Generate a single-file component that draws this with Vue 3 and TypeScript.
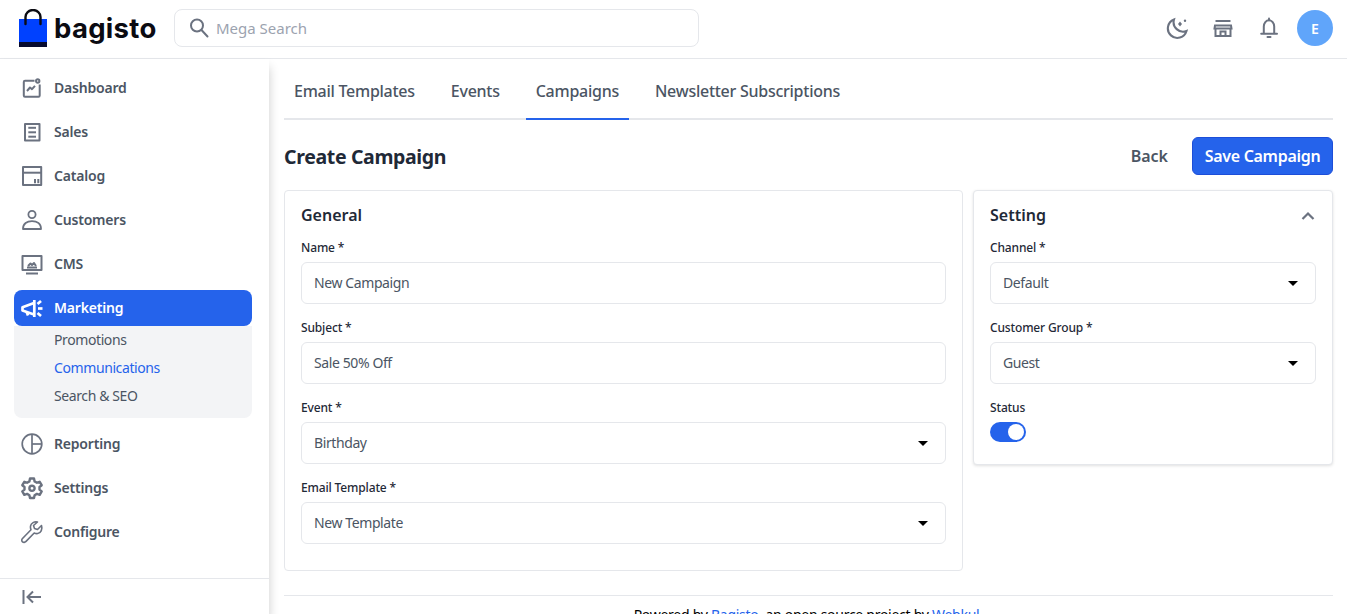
<script setup lang="ts">
interface NavItem {
  label: string;
  icon: string[];
  stroke?: number;
  active?: boolean;
  children?: { label: string; current?: boolean }[];
}

const nav: NavItem[] = [
  {
    label: "Dashboard",
    icon: [
      "M14.5 4.8H5A1.2 1.2 0 0 0 3.8 6V19.5A1.2 1.2 0 0 0 5 20.7H18.5A1.2 1.2 0 0 0 19.7 19.5V8.5",
      "M7 15L10 11.5L12 13.2L15 9.8",
      "M19.4 5A1.7 1.7 0 1 1 16 5A1.7 1.7 0 1 1 19.4 5Z",
    ],
  },
  {
    label: "Sales",
    icon: ["M5 4H19.5V20.5H5Z", "M8.3 7.8H16", "M8.3 12.3H16", "M8.3 16.7H16"],
  },
  {
    label: "Catalog",
    icon: ["M3 3H21.2V21H3Z", "M3 8.7H21.2", "M15 19.2V15", "M18.3 19.2V15"],
  },
  {
    label: "Customers",
    stroke: 1.8,
    icon: [
      "M15.6 6.5A3.6 3.6 0 1 1 8.4 6.5A3.6 3.6 0 1 1 15.6 6.5Z",
      "M3 21C3 15.5 7 13.2 12 13.2C17 13.2 21 15.5 21 21H3Z",
    ],
  },
  {
    label: "CMS",
    icon: [
      "M2.5 4H21.5V18H2.5Z",
      "M6 21.5H18",
      "M7 15.5H17",
      "M8 14L10.5 11.5L12 13L14 11L16 14",
    ],
  },
  {
    label: "Marketing",
    active: true,
    icon: [
      "M14.3 4V21",
      "M14 7L2.5 11.3V14.5L14 18.5",
      "M6.5 15.5L8 19.5",
      "M17.5 8L21 5",
      "M18 12.5H22.5",
      "M17.5 17L21 20",
    ],
    children: [
      { label: "Promotions" },
      { label: "Communications", current: true },
      { label: "Search & SEO" },
    ],
  },
  {
    label: "Reporting",
    stroke: 1.7,
    icon: [
      "M21.8 12A9.8 9.8 0 1 1 2.2 12A9.8 9.8 0 1 1 21.8 12Z",
      "M12 2.2V21.8",
      "M12 12H21.8",
    ],
  },
  {
    label: "Settings",
    stroke: 2.4,
    icon: [
      "M10 2.5H14L14.6 5.4L16.9 6.7L19.7 5.8L21.7 9.2L19.5 11V13.6L21.7 15.4L19.7 18.8L16.9 17.9L14.6 19.2L14 22H10L9.4 19.2L7.1 17.9L4.3 18.8L2.3 15.4L4.5 13.6V11L2.3 9.2L4.3 5.8L7.1 6.7L9.4 5.4Z",
      "M14.6 12.3A2.6 2.6 0 1 1 9.4 12.3A2.6 2.6 0 1 1 14.6 12.3Z",
    ],
  },
  {
    label: "Configure",
    stroke: 1.6,
    icon: [
      "M21.5 5.5L17.5 9.5L14.5 8.5L13.5 5.5L17.5 2C14.5 1.2 11 3 10.5 6.2C10.3 7.5 10.5 8.7 11 9.8L2.5 18.5C1.5 19.5 1.5 21 2.5 21.8C3.5 22.7 5 22.6 5.8 21.6L14.2 13C15.3 13.5 16.5 13.7 17.7 13.5C21 13 22.7 9 21.5 5.5Z",
    ],
  },
];

const tabs = [
  { label: "Email Templates" },
  { label: "Events" },
  { label: "Campaigns", active: true },
  { label: "Newsletter Subscriptions" },
];

const generalFields = [
  { label: "Name *", value: "New Campaign", select: false },
  { label: "Subject *", value: "Sale 50% Off", select: false },
  { label: "Event *", value: "Birthday", select: true },
  { label: "Email Template *", value: "New Template", select: true },
];

const settingFields = [
  { label: "Channel *", value: "Default", select: true },
  { label: "Customer Group *", value: "Guest", select: true },
];
</script>

<template>
  <div class="page">
    <header class="topbar">
      <div class="brand">
        <svg class="bag" viewBox="0 0 28 38" width="28" height="38">
          <rect x="0" y="10" width="28" height="28" fill="#0041ff" />
          <rect x="0" y="33" width="28" height="5" fill="#060a2e" />
          <path d="M6.5 15V8A7.5 7 0 0 1 21.5 8V15" fill="none" stroke="#0b0b12" stroke-width="2.4" stroke-linecap="round" />
        </svg>
        <span class="wordmark">bagisto</span>
      </div>
      <div class="search">
        <svg viewBox="0 0 24 24" width="24" height="24" fill="none" stroke="#6b7280" stroke-width="2">
          <circle cx="10" cy="9.5" r="6" />
          <path d="M14.5 14L20.5 20.5" stroke-linecap="round" />
        </svg>
        <span>Mega Search</span>
      </div>
      <div class="top-actions">
        <div class="top-icons">
          <svg viewBox="0 0 24 24" width="24" height="24" fill="none" stroke="#6b7280" stroke-width="2.1">
            <path d="M9 3.5A9.5 9.5 0 1 0 21.5 15A9.5 9.5 0 0 1 9 3.5Z" />
            <path d="M15 5.6L17 8L15 10.4L13 8Z" fill="#6b7280" stroke="none" />
            <circle cx="20" cy="4.7" r="1.2" fill="#6b7280" stroke="none" />
          </svg>
          <svg viewBox="0 0 24 24" width="24" height="24" fill="none" stroke="#6b7280" stroke-width="2">
            <path d="M4.5 5H19.5" />
            <path d="M4 9.5H20L20.5 12.5H3.5Z" />
            <path d="M4.5 12.5V20H19.5V12.5" />
            <path d="M9.5 20V15.5H14.5V20" />
          </svg>
          <svg viewBox="0 0 24 24" width="24" height="24" fill="none" stroke="#6b7280" stroke-width="2">
            <path d="M6.8 17.5V10.5A5.2 6.2 0 0 1 17.2 10.5V17.5" />
            <path d="M4.2 17.8H20" stroke-linecap="round" />
            <path d="M12 2.5V4.2" stroke-linecap="round" />
            <path d="M10.5 21H13.5" stroke-linecap="round" />
          </svg>
        </div>
        <div class="avatar">E</div>
      </div>
    </header>

    <div class="body">
      <aside class="sidebar">
        <nav class="menu">
          <div v-for="item in nav" :key="item.label" class="menu-group">
            <a class="menu-item" :class="{ active: item.active }">
              <svg viewBox="0 0 24 24" width="24" height="24" fill="none" stroke="currentColor" :stroke-width="item.stroke ?? 2" stroke-linejoin="round">
                <path v-for="d in item.icon" :key="d" :d="d" />
              </svg>
              <span>{{ item.label }}</span>
            </a>
            <div v-if="item.children" class="submenu">
              <a
                v-for="child in item.children"
                :key="child.label"
                :class="{ current: child.current }"
              >{{ child.label }}</a>
            </div>
          </div>
        </nav>
        <div class="collapse">
          <svg viewBox="0 0 24 24" width="24" height="24" fill="none" stroke="#6b7280" stroke-width="2">
            <path d="M3.5 5V19" />
            <path d="M21 12H8" />
            <path d="M13 6.5L7.5 12L13 17.5" />
          </svg>
        </div>
      </aside>

      <main class="content">
        <div class="tabs">
          <a v-for="tab in tabs" :key="tab.label" class="tab" :class="{ active: tab.active }">{{ tab.label }}</a>
        </div>

        <div class="title-row">
          <h1>Create Campaign</h1>
          <div class="title-actions">
            <a class="back">Back</a>
            <button type="button" class="save">Save Campaign</button>
          </div>
        </div>

        <div class="columns">
          <section class="card general">
            <h2>General</h2>
            <div v-for="field in generalFields" :key="field.label" class="field">
              <label>{{ field.label }}</label>
              <div class="control">
                <span>{{ field.value }}</span>
                <i v-if="field.select" class="caret"></i>
              </div>
            </div>
          </section>

          <section class="card setting">
            <div class="card-head">
              <h2>Setting</h2>
              <svg viewBox="0 0 24 24" width="24" height="24" fill="none" stroke="#6b7280" stroke-width="2.2">
                <path d="M6.5 16L12 10.5L17.5 16" />
              </svg>
            </div>
            <div v-for="field in settingFields" :key="field.label" class="field">
              <label>{{ field.label }}</label>
              <div class="control">
                <span>{{ field.value }}</span>
                <i class="caret"></i>
              </div>
            </div>
            <div class="field status">
              <label>Status</label>
              <div class="toggle"><i></i></div>
            </div>
          </section>
        </div>

        <footer class="powered">
          Powered by <a>Bagisto</a>, an open source project by <a>Webkul</a>
        </footer>
      </main>
    </div>
  </div>
</template>

<style>
html,
body {
  margin: 0;
  background: #fff;
}
</style>

<style scoped>
* {
  box-sizing: border-box;
}

.page {
  height: 614px;
  overflow: hidden;
  font-family: "Noto Sans", sans-serif;
  color: #4b5563;
}

.topbar {
  height: 59px;
  display: flex;
  align-items: center;
  padding: 0 14px 2px 19px;
  border-bottom: 1px solid #e5e7eb;
}

.brand {
  display: flex;
  align-items: flex-end;
  gap: 7px;
  width: 155px;
}

.bag {
  display: block;
}

.wordmark {
  font-family: Inter, sans-serif;
  font-size: 27.5px;
  font-weight: 700;
  line-height: 38px;
  letter-spacing: 0.3px;
  color: #0b0b12;
}

.search {
  width: 525px;
  height: 38px;
  display: flex;
  align-items: center;
  gap: 5px;
  padding-left: 12px;
  border: 1px solid #e5e7eb;
  border-radius: 8px;
  font-size: 15px;
  color: #9ca3af;
}

.top-actions {
  margin-left: auto;
  display: flex;
  align-items: center;
  gap: 16px;
}

.top-icons {
  display: flex;
  align-items: center;
  gap: 22px;
}

.avatar {
  width: 36px;
  height: 36px;
  border-radius: 50%;
  background: #60a5fa;
  color: #fff;
  font-size: 14px;
  font-weight: 600;
  display: flex;
  align-items: center;
  justify-content: center;
}

.body {
  display: flex;
  height: 555px;
}

.sidebar {
  width: 269px;
  flex: none;
  display: flex;
  flex-direction: column;
  padding-top: 11px;
  box-shadow: 0 8px 10px 0 rgba(0, 0, 0, 0.2);
}

.menu {
  flex: 1;
  display: flex;
  flex-direction: column;
  gap: 8px;
  padding: 0 17px 0 14px;
}

.menu-item {
  height: 36px;
  display: flex;
  align-items: center;
  gap: 10px;
  padding-left: 6px;
  border-radius: 8px;
  font-size: 14px;
  font-weight: 600;
  letter-spacing: -0.2px;
  color: #4b5563;
}

.menu-item span {
  padding-bottom: 2px;
}

.menu-item svg {
  color: #6b7280;
  flex: none;
}

.menu-item.active {
  background: #2563eb;
  color: #fff;
}

.menu-item.active svg {
  color: #fff;
  stroke-width: 2.7;
}

.submenu {
  display: flex;
  flex-direction: column;
  padding: 0 0 8px 40px;
  background: #f3f4f6;
  border-radius: 0 0 8px 8px;
  font-size: 14px;
  letter-spacing: -0.4px;
}

.submenu a {
  height: 28px;
  line-height: 28px;
  color: #4b5563;
}

.submenu a.current {
  color: #2563eb;
}

.collapse {
  height: 36px;
  flex: none;
  display: flex;
  align-items: center;
  padding-left: 20px;
  border-top: 1px solid #e5e7eb;
}

.content {
  flex: 1;
  min-width: 0;
  padding: 11px 14px 0 15px;
}

.tabs {
  display: flex;
  gap: 16px;
  height: 50px;
  border-bottom: 2px solid #e5e7eb;
}

.tab {
  height: 50px;
  padding: 9px 10px 0;
  font-size: 16px;
  font-weight: 500;
  line-height: 24px;
  letter-spacing: -0.26px;
  white-space: nowrap;
}

.tab.active {
  border-bottom: 2px solid #2563eb;
}

.title-row {
  display: flex;
  align-items: center;
  justify-content: space-between;
  margin-top: 17px;
  height: 38px;
}

h1 {
  margin: 0;
  font-size: 19.5px;
  font-weight: 700;
  letter-spacing: -0.35px;
  color: #1f2937;
}

.title-actions {
  display: flex;
  align-items: center;
  gap: 24px;
}

.back {
  font-size: 16px;
  font-weight: 600;
}

.save {
  height: 38px;
  width: 141px;
  padding: 0;
  border: 1px solid #1d4ed8;
  border-radius: 6px;
  background: #2563eb;
  color: #fff;
  font-family: inherit;
  font-size: 16px;
  font-weight: 600;
  letter-spacing: -0.3px;
}

.columns {
  display: flex;
  align-items: flex-start;
  gap: 10px;
  margin-top: 15px;
}

.card {
  background: #fff;
  border: 1px solid #e5e7eb;
  border-radius: 4px;
  padding: 12px 16px 0;
}

.general {
  width: 679px;
  height: 381px;
}

.setting {
  width: 360px;
  height: 275px;
  box-shadow: 0 1px 3px rgba(0, 0, 0, 0.12);
}

.card-head {
  display: flex;
  align-items: center;
  justify-content: space-between;
}

.card-head svg {
  margin-right: -4px;
}

h2 {
  margin: 0;
  font-size: 16px;
  font-weight: 600;
  line-height: 24px;
  color: #1f2937;
}

.field {
  height: 80px;
  padding-top: 8px;
}

.field label {
  display: block;
  height: 24px;
  margin-bottom: 3px;
  font-size: 12px;
  font-weight: 500;
  line-height: 26px;
  letter-spacing: -0.15px;
  color: #1f2937;
}

.control {
  height: 42px;
  display: flex;
  align-items: center;
  justify-content: space-between;
  padding: 0 17px 0 12px;
  border: 1px solid #e5e7eb;
  border-radius: 6px;
  font-size: 14px;
  letter-spacing: -0.4px;
  color: #4b5563;
}

.control span {
  padding-bottom: 2px;
}

.caret {
  width: 0;
  height: 0;
  border-left: 5px solid transparent;
  border-right: 5px solid transparent;
  border-top: 5px solid #000;
}

.status {
  height: auto;
}

.toggle {
  width: 36px;
  height: 20px;
  display: flex;
  justify-content: flex-end;
  padding: 2px;
  border-radius: 10px;
  background: #2563eb;
}

.toggle i {
  width: 16px;
  height: 16px;
  border-radius: 50%;
  background: #fff;
}

.powered {
  margin-top: 24px;
  padding: 9px 4px 0 0;
  border-top: 1px solid #e5e7eb;
  text-align: center;
  font-size: 14px;
  line-height: 20px;
  letter-spacing: -0.27px;
  color: #000;
}

.powered a {
  color: #2563eb;
}
</style>
